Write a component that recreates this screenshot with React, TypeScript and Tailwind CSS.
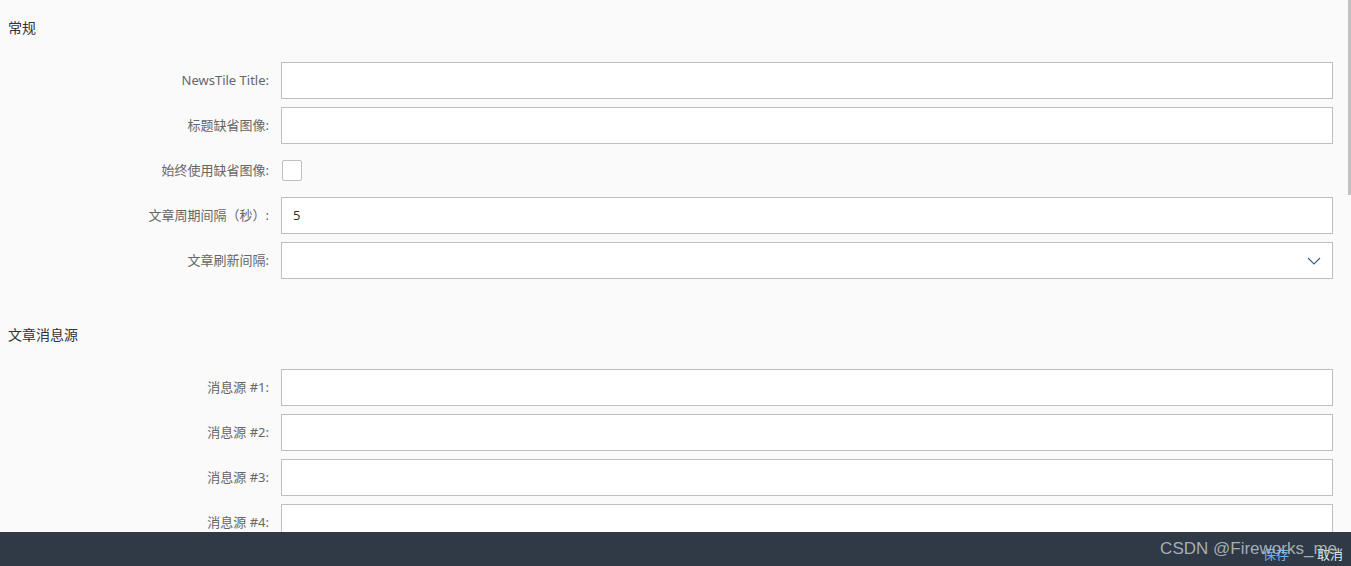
const font = { fontFamily: '"Noto Sans", "Noto Sans CJK SC", sans-serif' };

function Row({ label, children }: { label: string; children: React.ReactNode }) {
  return (
    <div className="flex items-center h-[37px]">
      <div className="w-[269px] shrink-0 text-right text-[13px] text-[#666]">{label}</div>
      <div className="ml-[12px] w-[1052px] flex items-center">{children}</div>
    </div>
  );
}

function TextInput({ value }: { value?: string }) {
  return (
    <div className="h-[37px] w-full bg-white border border-[#bfbfbf] flex items-center px-[11px] text-[13px] text-[#333]">
      {value}
    </div>
  );
}

export default function App() {
  const sources = ["消息源 #1:", "消息源 #2:", "消息源 #3:", "消息源 #4:"];

  return (
    <div className="relative h-[566px] w-[1351px] overflow-hidden bg-[#fafafa]" style={font}>
      <div className="absolute right-0 top-0 h-[195px] w-[3px] bg-[#c1c1c1]" />

      <div className="pt-[18px]">
        <h2 className="pl-[8px] h-[20px] leading-[20px] text-[14px] text-[#333]">常规</h2>
        <div className="mt-[24px] flex flex-col gap-[8px]">
          <Row label="NewsTile Title:">
            <TextInput />
          </Row>
          <Row label="标题缺省图像:">
            <TextInput />
          </Row>
          <Row label="始终使用缺省图像:">
            <div className="ml-[1px] h-[21px] w-[20px] rounded-[2px] border border-[#bfbfbf] bg-white" />
          </Row>
          <Row label="文章周期间隔（秒）:">
            <TextInput value="5" />
          </Row>
          <Row label="文章刷新间隔:">
            <div className="h-[37px] w-full bg-white border border-[#bfbfbf] flex items-center justify-end pr-[11px]">
              <svg width="14" height="8" viewBox="0 0 14 8" fill="none" className="mt-[1px]">
                <path d="M1 1 L7 7 L13 1" stroke="#346187" strokeWidth="1.1" />
              </svg>
            </div>
          </Row>
        </div>

        <h2 className="mt-[46px] pl-[8px] h-[20px] leading-[20px] text-[14px] text-[#333]">文章消息源</h2>
        <div className="mt-[24px] flex flex-col gap-[8px]">
          {sources.map((s) => (
            <Row key={s} label={s}>
              <TextInput />
            </Row>
          ))}
        </div>
      </div>

      <div className="absolute left-0 right-0 bottom-0 h-[34px] bg-[#2f3a46]">
        <div className="absolute right-[8px] top-[13px] flex gap-[28px] text-[13px]">
          <span className="text-[#6cb2f0]">保存</span>
          <span className="text-[#dbe9f7]">取消</span>
        </div>
        <div className="absolute right-[14px] top-[4px] text-[17px] text-[#b8bdc3]/90" style={{ fontFamily: '"Liberation Sans", sans-serif' }}>
          CSDN @Fireworks_me
        </div>
      </div>
    </div>
  );
}
